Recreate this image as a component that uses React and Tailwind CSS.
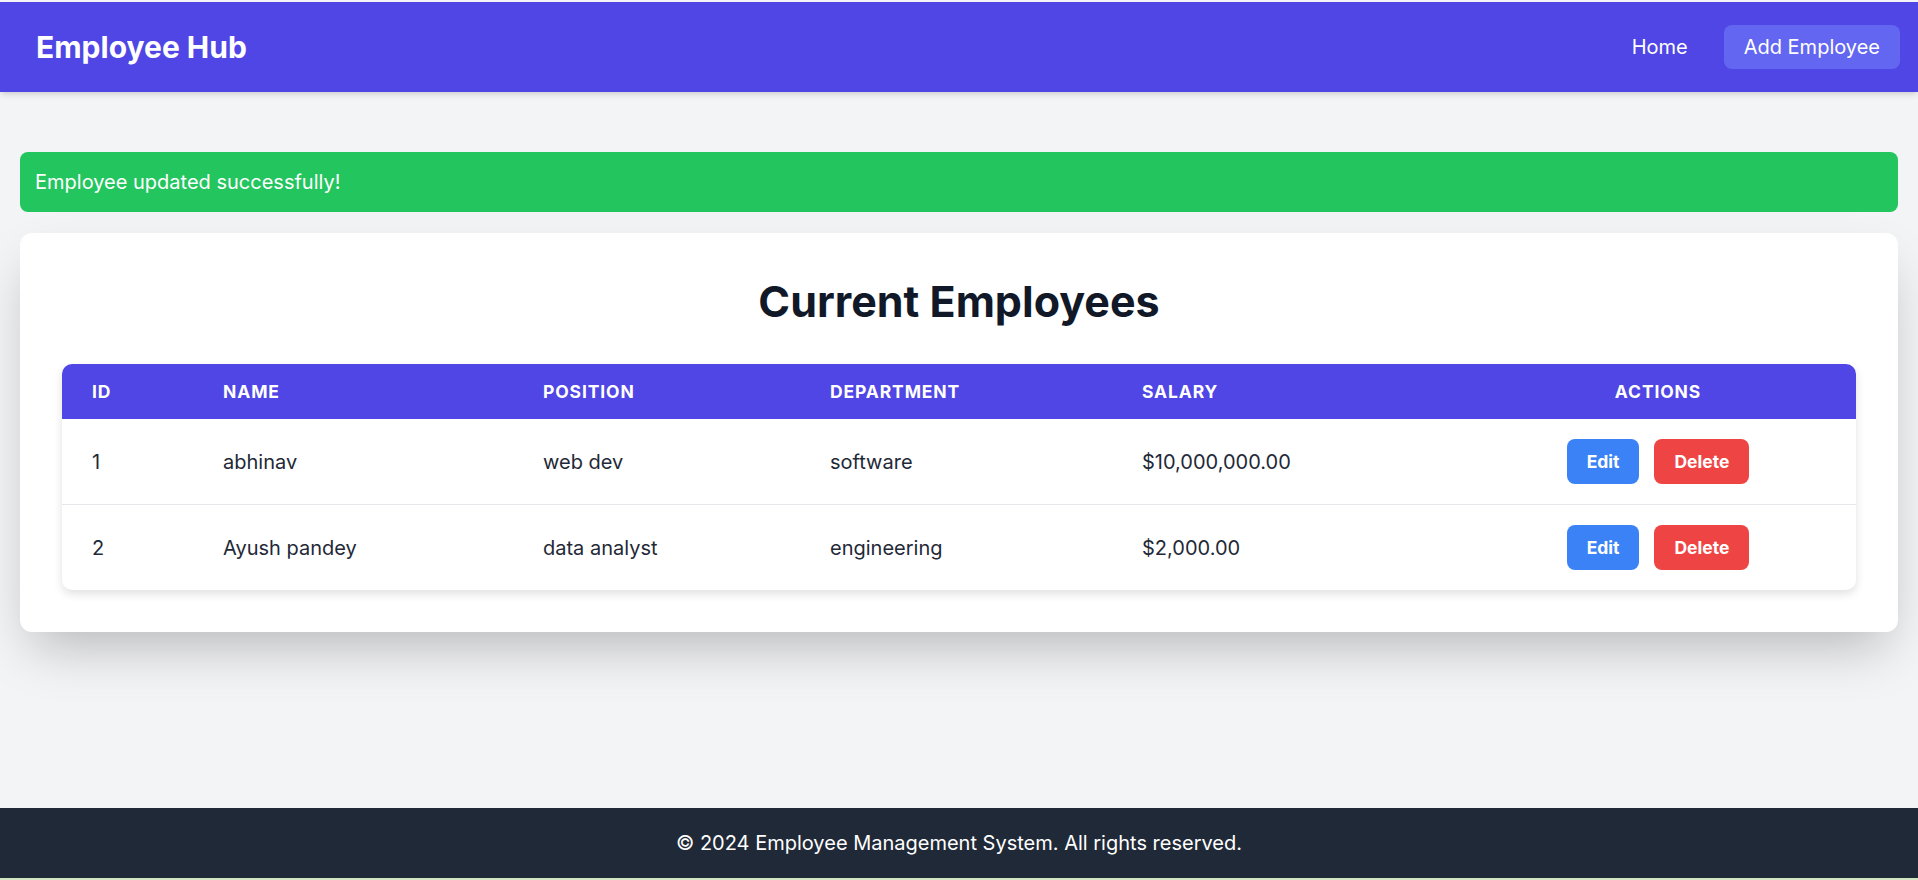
import React from 'react';

const employees = [
  { id: 1, name: 'abhinav', position: 'web dev', department: 'software', salary: 10000000 },
  { id: 2, name: 'Ayush pandey', position: 'data analyst', department: 'engineering', salary: 2000 },
];

const formatSalary = (value) =>
  '$' + value.toLocaleString('en-US', { minimumFractionDigits: 2, maximumFractionDigits: 2 });

const Navbar = () => (
  <nav className="h-[90px] bg-[#4f46e5] shadow-md flex items-center justify-between pl-[36px] pr-[18px]">
    <h1 className="text-[30px] font-bold text-white leading-[40px]">Employee Hub</h1>
    <div className="flex items-center gap-[36px]">
      <a href="#" className="text-[20px] text-white leading-[24px]">Home</a>
      <a href="#" className="text-[20px] text-white leading-[24px] bg-[#6366f1] rounded-[8px] px-[20px] py-[10px]">
        Add Employee
      </a>
    </div>
  </nav>
);

const EmployeeTable = () => (
  <div className="rounded-[10px] overflow-hidden shadow-[0_4px_10px_rgba(0,0,0,0.12)] bg-white">
    <table className="w-full table-fixed border-collapse">
      <thead className="bg-[#4f46e5] text-white">
        <tr className="text-[17.5px] font-bold uppercase tracking-wider leading-[25px]">
          <th className="w-[131px] px-[30px] py-[15px] text-left">ID</th>
          <th className="w-[320px] px-[30px] py-[15px] text-left">Name</th>
          <th className="w-[287px] px-[30px] py-[15px] text-left">Position</th>
          <th className="w-[312px] px-[30px] py-[15px] text-left">Department</th>
          <th className="w-[346px] px-[30px] py-[15px] text-left">Salary</th>
          <th className="w-[400px] px-[30px] py-[15px] text-center">Actions</th>
        </tr>
      </thead>
      <tbody className="text-[20px] text-[#1f2937] leading-[30px]">
        {employees.map((emp, i) => (
          <tr key={emp.id} className={i > 0 ? 'border-t border-[#e5e7eb]' : ''}>
            <td className="px-[30px] py-[20px]">{emp.id}</td>
            <td className="px-[30px] py-[20px]">{emp.name}</td>
            <td className="px-[30px] py-[20px]">{emp.position}</td>
            <td className="px-[30px] py-[20px]">{emp.department}</td>
            <td className="px-[30px] py-[20px]">{formatSalary(emp.salary)}</td>
            <td className="px-[30px] py-[20px]">
              <div className="flex justify-center gap-[15px]">
                <button className="bg-[#3b82f6] text-white font-bold text-[17.5px] leading-[25px] px-[20px] py-[10px] rounded-[8px]">
                  Edit
                </button>
                <button className="bg-[#ef4444] text-white font-bold text-[17.5px] leading-[25px] px-[20px] py-[10px] rounded-[8px]">
                  Delete
                </button>
              </div>
            </td>
          </tr>
        ))}
      </tbody>
    </table>
  </div>
);

export default function App() {
  return (
    <div className="min-h-screen flex flex-col bg-[#f3f4f6] pt-[2px] font-['Inter',sans-serif]">
      <Navbar />

      <main className="flex-1 px-[20px] pt-[60px]">
        {/* Success Message */}
        <div className="bg-[#22c55e] text-white text-[20px] leading-[30px] px-[15px] py-[15px] rounded-[8px] mb-[21px]">
          Employee updated successfully!
        </div>

        <div className="bg-white rounded-[12px] shadow-[0_25px_50px_-12px_rgba(0,0,0,0.25)] px-[42px] pt-[43px] pb-[42px]">
          <h2 className="text-[43px] font-bold text-[#111827] text-center leading-[50px] mb-[38px]">
            Current Employees
          </h2>
          <EmployeeTable />
        </div>
      </main>

      <footer className="bg-[#1f2937] text-white text-center text-[20px] leading-[30px] py-[20px]">
        © 2024 Employee Management System. All rights reserved.
      </footer>
      <div className="h-[2px] bg-[#d3e6c4]" />
    </div>
  );
}
